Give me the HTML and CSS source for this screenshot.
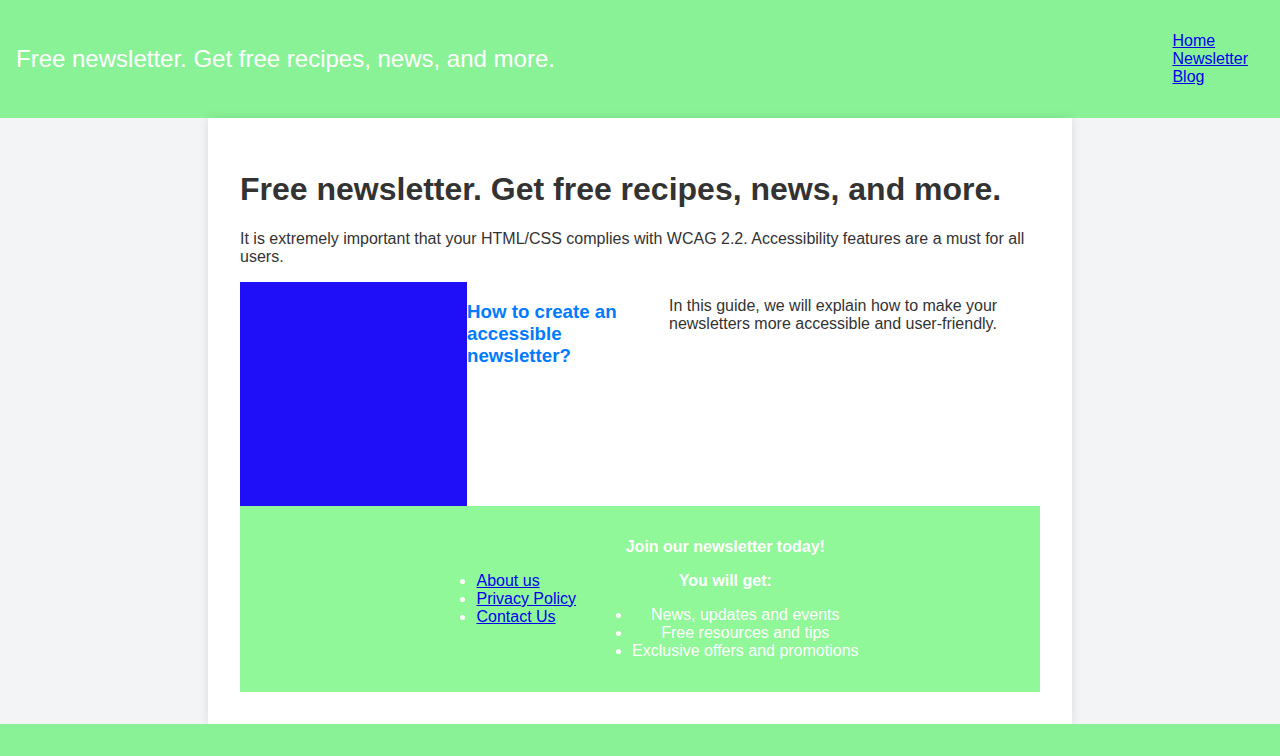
FILE: index.html
```html
<!DOCTYPE html>
<html lang="en">
<head>
<meta charset="utf-8">
<title>Free newsletter</title>
<link rel="stylesheet" href="styles.css">
</head>
<body>
<header class="site-header">
  <p class="site-title">Free newsletter. Get free recipes, news, and more.</p>
  <nav class="site-nav" aria-label="Main">
    <ul class="nav-list">
      <li><a href="#">Home</a></li>
      <li><a href="#">Newsletter</a></li>
      <li><a href="#">Blog</a></li>
    </ul>
  </nav>
</header>
<main class="card">
  <h1 class="page-title">Free newsletter. Get free recipes, news, and more.</h1>
  <p class="intro">It is extremely important that your HTML/CSS complies with WCAG 2.2. Accessibility features are a must for all users.</p>
  <section class="article-row">
    <div class="article-image" role="img" aria-label="Newsletter illustration"></div>
    <h3 class="article-title">How to create an accessible newsletter?</h3>
    <p class="article-text">In this guide, we will explain how to make your newsletters more accessible and user-friendly.</p>
  </section>
  <section class="signup">
    <ul class="signup-links">
      <li><a href="#">About us</a></li>
      <li><a href="#">Privacy Policy</a></li>
      <li><a href="#">Contact Us</a></li>
    </ul>
    <div class="signup-info">
      <p class="signup-head">Join our newsletter today!</p>
      <p class="signup-head">You will get:</p>
      <ul class="benefits">
        <li>News, updates and events</li>
        <li>Free resources and tips</li>
        <li>Exclusive offers and promotions</li>
      </ul>
    </div>
  </section>
</main>
<footer class="site-footer"></footer>
</body>
</html>
```
FILE: styles.css
```css
html, body {
  margin: 0;
  padding: 0;
}
body {
  font-family: "Liberation Sans", Arial, sans-serif;
  background: #f3f4f6;
  color: #333333;
}
.site-header {
  background: #8af296;
  display: flex;
  justify-content: space-between;
  align-items: center;
  box-sizing: border-box;
  height: 118px;
  padding: 0 16px;
}
.site-title {
  margin: 0;
  font-size: 24px;
  color: #ffffff;
}
.nav-list {
  list-style: none;
  margin: 0;
  padding: 0 16px 0 0;
  font-size: 16px;
}
.nav-list a {
  color: #0000ee;
}
.card {
  display: block;
  width: 800px;
  margin: 0 auto;
  padding: 32px;
  background: #ffffff;
  box-shadow: 0 0 10px rgba(0, 0, 0, 0.1);
}
.page-title {
  font-size: 32px;
  margin: 21.44px 0;
  color: #333333;
}
.intro {
  font-size: 16px;
  margin: 16px 0;
}
.article-row {
  display: grid;
  grid-template-columns: 227px 202px 1fr;
  align-items: start;
}
.article-image {
  height: 224px;
  background: #1f0ff9;
}
.article-title {
  font-size: 18.72px;
  margin: 18.72px 0;
  color: #007bff;
}
.article-text {
  font-size: 16px;
  margin: 15.4px 0;
}
.signup {
  background: #90f898;
  color: #ffffff;
  display: flex;
  justify-content: center;
  align-items: center;
  gap: 16px;
  padding: 16px 0 16px 15px;
}
.signup-links {
  margin: 0;
  padding-left: 40px;
}
.signup-links a {
  color: #0000ee;
}
.signup-info {
  text-align: center;
}
.signup-head {
  font-weight: bold;
  margin: 16px 0;
}
.benefits {
  margin: 16px 0;
  padding-left: 40px;
}
.site-footer {
  background: #8af296;
  height: 32px;
}
```
